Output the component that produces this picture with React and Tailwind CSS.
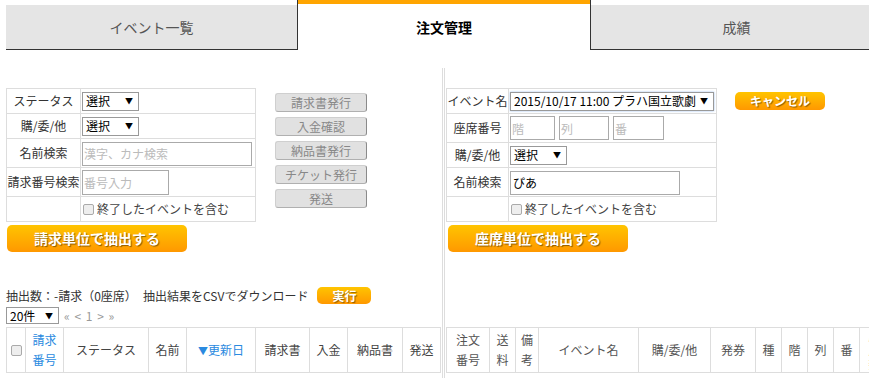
import React from 'react';

const Sel = ({ className, text }) => (
  <div className={`flex items-center bg-white border border-[#999] pl-[3px] pr-[5px] text-[12px] text-black ${className}`}>
    <span className="flex-1 min-w-0 whitespace-nowrap overflow-hidden">{text}</span>
    <span className="text-[8px] leading-none ml-[4px] shrink-0">▼</span>
  </div>
);

const Check = () => (
  <div className="w-[11px] h-[11px] border border-[#aaa] rounded-[2px] bg-[#eee] shrink-0" />
);

const OrangeBtn = ({ className, children }) => (
  <button className={`bg-gradient-to-b from-[#ffc400] to-[#ff9800] rounded-[5px] text-white font-bold [text-shadow:1px_1px_1px_rgba(0,0,0,0.45)] ${className}`}>
    {children}
  </button>
);

const GrayBtn = ({ children }) => (
  <button className="w-[92px] h-[19px] bg-[#e1e1e1] border border-[#cfcfcf] border-r-[#8a8a8a] border-b-[#b0b0b0] rounded-[3px] text-[12px] leading-none text-[#888]">
    {children}
  </button>
);

const Label = ({ children, h }) => (
  <td className={`border border-[#ddd] text-center text-[12px] text-[#333] whitespace-nowrap p-0 ${h}`}>{children}</td>
);

const leftCols = [19, 38, 85, 38, 69, 54, 38, 55, 38];
const rightCols = [43, 26, 23, 100, 72, 45, 26, 26, 26, 26, 30];

export default function App() {
  return (
    <div className="w-[869px] h-[378px] overflow-hidden bg-white font-['Noto_Sans_CJK_JP','Noto_Sans',sans-serif]">
      {/* tabs */}
      <div className="flex h-[50px]">
        <div className="shrink-0 ml-[6px] mt-[5px] w-[291px] h-[45px] bg-[#e5e5e5] border-b border-[#333] flex items-center justify-center text-[14px] text-[#555]">
          イベント一覧
        </div>
        <div className="shrink-0 w-[294px] h-[50px] border-x border-[#333] flex flex-col">
          <div className="h-[4px] bg-[#ffa500]" />
          <div className="flex-1 flex items-center justify-center text-[14px] font-bold text-black">注文管理</div>
        </div>
        <div className="shrink-0 mt-[5px] w-[291px] h-[45px] bg-[#e5e5e5] border-b border-[#333] flex items-center justify-center text-[14px] text-[#555]">
          成績
        </div>
      </div>

      <div className="flex mt-[18px] h-[310px]">
        {/* left pane */}
        <div className="shrink-0 w-[443px] border-r border-[#ddd] pt-[20px] pl-[6px]">
          <div className="flex">
            <table className="border-collapse w-[250px] table-fixed">
              <colgroup>
                <col className="w-[74px]" />
                <col />
              </colgroup>
              <tbody>
                <tr>
                  <Label h="h-[25px]">ステータス</Label>
                  <td className="border border-[#ddd] p-0 pl-[1px]"><Sel className="w-[57px] h-[19px]" text="選択" /></td>
                </tr>
                <tr>
                  <Label h="h-[25px]">購/委/他</Label>
                  <td className="border border-[#ddd] p-0 pl-[1px]"><Sel className="w-[57px] h-[19px]" text="選択" /></td>
                </tr>
                <tr>
                  <Label h="h-[29px]">名前検索</Label>
                  <td className="border border-[#ddd] p-0 pl-[1px]">
                    <input className="w-[170px] h-[24px] border border-[#aaa] px-[1px] text-[12px] placeholder:text-[#bbb] outline-none" placeholder="漢字、カナ検索" />
                  </td>
                </tr>
                <tr>
                  <Label h="h-[29px]">請求番号検索</Label>
                  <td className="border border-[#ddd] p-0 pl-[1px]">
                    <input className="w-[87px] h-[25px] border border-[#aaa] px-[1px] text-[12px] placeholder:text-[#bbb] outline-none" placeholder="番号入力" />
                  </td>
                </tr>
                <tr>
                  <Label h="h-[25px]"></Label>
                  <td className="border border-[#ddd] p-0 pl-[2px]">
                    <div className="flex items-center gap-[3px] text-[12px] text-[#444]"><Check />終了したイベントを含む</div>
                  </td>
                </tr>
              </tbody>
            </table>
            <div className="ml-[19px] mt-[5px] flex flex-col gap-[5px]">
              <GrayBtn>請求書発行</GrayBtn>
              <GrayBtn>入金確認</GrayBtn>
              <GrayBtn>納品書発行</GrayBtn>
              <GrayBtn>チケット発行</GrayBtn>
              <GrayBtn>発送</GrayBtn>
            </div>
          </div>
          <OrangeBtn className="mt-[3px] ml-[1px] w-[180px] h-[27px] text-[14px]">請求単位で抽出する</OrangeBtn>

          <div className="mt-[35px] h-[17px] flex items-center text-[12px] text-[#333]">
            <span className="w-[137px] whitespace-nowrap">抽出数：-請求（0座席）</span>
            <span className="whitespace-nowrap">抽出結果をCSVでダウンロード</span>
            <OrangeBtn className="ml-[9px] w-[54px] h-[17px] text-[12px] leading-none rounded-[4px]">実行</OrangeBtn>
          </div>
          <div className="mt-[3px] h-[17px] flex items-center">
            <Sel className="w-[53px] h-[17px]" text="20件" />
            <span className="ml-[5px] text-[12px] text-[#999] tracking-[1px]">« &lt; 1 &gt; »</span>
          </div>
          <table className="mt-[3px] border-collapse table-fixed w-[434px] text-[12px] text-[#444]">
            <colgroup>
              {leftCols.map((w, i) => <col key={i} style={{ width: w }} />)}
            </colgroup>
            <thead>
              <tr className="h-[45px]">
                <th className="border border-[#ddd] font-normal"><div className="flex justify-center"><Check /></div></th>
                <th className="border border-[#ddd] font-normal text-[#2a8ae0] leading-[20px]">請求<br />番号</th>
                <th className="border border-[#ddd] font-normal">ステータス</th>
                <th className="border border-[#ddd] font-normal">名前</th>
                <th className="border border-[#ddd] font-normal text-[#2a8ae0]"><span className="text-[10px]">▼</span>更新日</th>
                <th className="border border-[#ddd] font-normal">請求書</th>
                <th className="border border-[#ddd] font-normal">入金</th>
                <th className="border border-[#ddd] font-normal">納品書</th>
                <th className="border border-[#ddd] font-normal">発送</th>
              </tr>
            </thead>
          </table>
        </div>

        {/* right pane */}
        <div className="shrink-0 w-[500px] ml-[1px] border-l border-[#ddd] pt-[20px] pl-[1px]">
          <div className="flex items-start">
            <table className="border-collapse w-[271px] table-fixed">
              <colgroup>
                <col className="w-[62px]" />
                <col />
              </colgroup>
              <tbody>
                <tr>
                  <Label h="h-[25px]">イベント名</Label>
                  <td className="border border-[#ddd] p-0 pl-[1px]">
                    <Sel className="w-[204px] h-[19px] border-[#6f9fe6] shadow-[0_0_2px_#9bbff0]" text="2015/10/17 11:00 プラハ国立歌劇場" />
                  </td>
                </tr>
                <tr>
                  <Label h="h-[29px]">座席番号</Label>
                  <td className="border border-[#ddd] p-0 pl-[1px]">
                    <div className="flex gap-[4px]">
                      <input className="w-[45px] h-[24px] border border-[#aaa] px-[1px] text-[12px] placeholder:text-[#bbb] outline-none" placeholder="階" />
                      <input className="w-[50px] h-[24px] border border-[#aaa] px-[1px] text-[12px] placeholder:text-[#bbb] outline-none" placeholder="列" />
                      <input className="w-[51px] h-[24px] border border-[#aaa] px-[1px] text-[12px] placeholder:text-[#bbb] outline-none" placeholder="番" />
                    </div>
                  </td>
                </tr>
                <tr>
                  <Label h="h-[25px]">購/委/他</Label>
                  <td className="border border-[#ddd] p-0 pl-[1px]"><Sel className="w-[57px] h-[19px]" text="選択" /></td>
                </tr>
                <tr>
                  <Label h="h-[29px]">名前検索</Label>
                  <td className="border border-[#ddd] p-0 pl-[1px]">
                    <input className="w-[170px] h-[24px] border border-[#aaa] px-[2px] text-[12px] text-black outline-none" defaultValue="ぴあ" />
                  </td>
                </tr>
                <tr>
                  <Label h="h-[25px]"></Label>
                  <td className="border border-[#ddd] p-0 pl-[2px]">
                    <div className="flex items-center gap-[3px] text-[12px] text-[#444]"><Check />終了したイベントを含む</div>
                  </td>
                </tr>
              </tbody>
            </table>
            <OrangeBtn className="ml-[18px] mt-[4px] w-[90px] h-[18px] text-[12px] leading-none">キャンセル</OrangeBtn>
          </div>
          <OrangeBtn className="mt-[3px] ml-[2px] w-[180px] h-[27px] text-[14px]">座席単位で抽出する</OrangeBtn>
          <div className="h-[75px]" />
          <table className="border-collapse table-fixed w-[443px] text-[12px] text-[#555]">
            <colgroup>
              {rightCols.map((w, i) => <col key={i} style={{ width: w }} />)}
            </colgroup>
            <thead>
              <tr className="h-[45px]">
                <th className="border border-[#ddd] font-normal leading-[20px]">注文<br />番号</th>
                <th className="border border-[#ddd] font-normal leading-[20px]">送<br />料</th>
                <th className="border border-[#ddd] font-normal leading-[20px]">備<br />考</th>
                <th className="border border-[#ddd] font-normal">イベント名</th>
                <th className="border border-[#ddd] font-normal">購/委/他</th>
                <th className="border border-[#ddd] font-normal">発券</th>
                <th className="border border-[#ddd] font-normal">種</th>
                <th className="border border-[#ddd] font-normal">階</th>
                <th className="border border-[#ddd] font-normal">列</th>
                <th className="border border-[#ddd] font-normal">番</th>
                <th className="border border-[#ddd] font-normal leading-[14px]">座<br />席<br />数</th>
              </tr>
            </thead>
          </table>
        </div>
      </div>
    </div>
  );
}
